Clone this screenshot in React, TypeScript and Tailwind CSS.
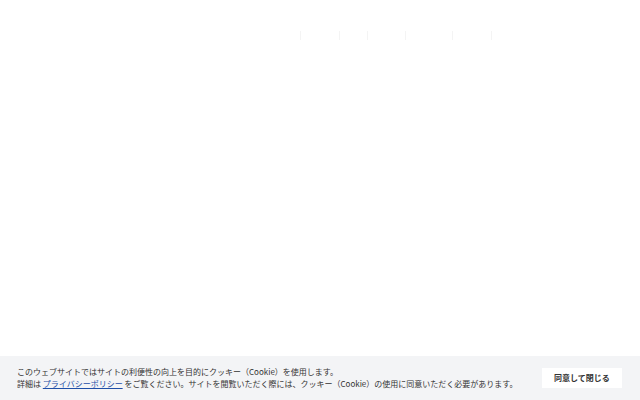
import React from "react";

export default function App() {
  const font = { fontFamily: '"Noto Sans CJK JP", "Noto Sans", sans-serif' };
  return (
    <div className="w-[640px] h-[400px] bg-white flex flex-col overflow-hidden" style={font}>
      <header className="h-[72px] flex items-start pt-[31px]">
        <nav className="ml-[300px] flex items-stretch h-[9px]">
          <span className="w-[39px] border-l border-[#f4f4f4]" />
          <span className="w-[28px] border-l border-[#f4f4f4]" />
          <span className="w-[38px] border-l border-[#f4f4f4]" />
          <span className="w-[47px] border-l border-[#f4f4f4]" />
          <span className="w-[39px] border-l border-[#f4f4f4]" />
          <span className="w-[1px] border-l border-[#f4f4f4]" />
        </nav>
      </header>
      <main className="flex-1" />
      <div className="h-[44px] bg-[#f3f4f6] flex items-center pl-[17px] pr-[18px]">
        <div className="flex-1 text-[8px] leading-[12px] text-[#333333]">
          <p>このウェブサイトではサイトの利便性の向上を目的にクッキー（Cookie）を使用します。</p>
          <p>
            詳細は <a className="text-[#1f4fa8] underline">プライバシーポリシー</a> をご覧ください。サイトを閲覧いただく際には、クッキー（Cookie）の使用に同意いただく必要があります。
          </p>
        </div>
        <button className="w-[80px] h-[20px] bg-white text-[8px] font-bold text-[#333333]">
          同意して閉じる
        </button>
      </div>
    </div>
  );
}
